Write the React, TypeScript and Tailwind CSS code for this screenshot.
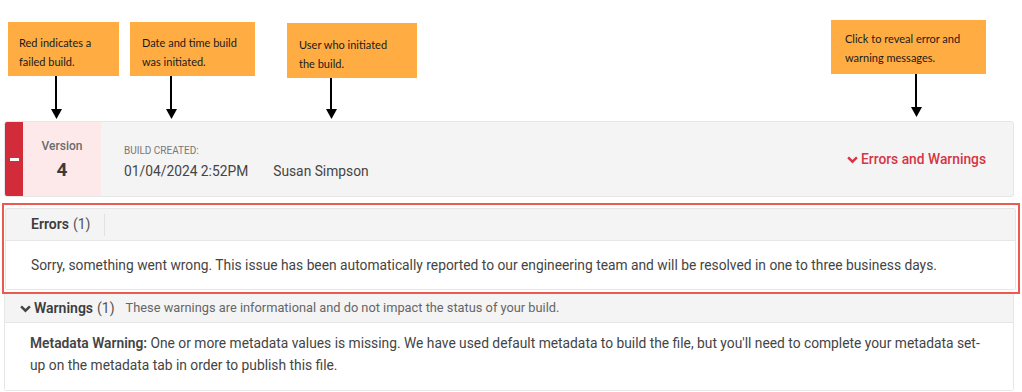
import React from "react";

type Note = {
  text: string[];
  box: string;
  arrow: string;
};

const notes: Note[] = [
  {
    text: ["Red indicates a", "failed build."],
    box: "left-[8px] top-[22px] w-[111px] h-[54px] pl-[11px] pt-[11px]",
    arrow: "left-[51px] top-[76px] h-[43px]",
  },
  {
    text: ["Date and time build", "was initiated."],
    box: "left-[130px] top-[22px] w-[125px] h-[54px] pl-[12px] pt-[11px]",
    arrow: "left-[166px] top-[76px] h-[43px]",
  },
  {
    text: ["User who initiated", "the build."],
    box: "left-[287px] top-[23px] w-[130px] h-[55px] pl-[12px] pt-[12px]",
    arrow: "left-[326px] top-[78px] h-[41px]",
  },
  {
    text: ["Click to reveal error and", "warning messages."],
    box: "left-[831px] top-[20px] w-[155px] h-[54px] pl-[14px] pt-[9px]",
    arrow: "left-[911px] top-[74px] h-[43px]",
  },
];

function Arrow({ className }: { className: string }) {
  return (
    <div className={`absolute w-[10px] flex flex-col items-center ${className}`}>
      <div className="w-[2px] flex-1 bg-black" />
      <svg width="11" height="10" viewBox="0 0 11 10">
        <path d="M0 0 L11 0 L5.5 10 Z" fill="#000" />
      </svg>
    </div>
  );
}

function Chevron({ color, size = 11 }: { color: string; size?: number }) {
  return (
    <svg width={size} height={size} viewBox="0 0 10 10" fill="none">
      <path d="M1 3 L5 7 L9 3" stroke={color} strokeWidth="2.2" />
    </svg>
  );
}

export default function App() {
  return (
    <div className="w-[1022px] h-[392px] bg-white overflow-hidden font-['Roboto',sans-serif] text-[#3d3d3d]">
      {/* annotations */}
      <div className="relative h-[121px]">
        {notes.map((n, i) => (
          <React.Fragment key={i}>
            <div
              className={`absolute bg-[#FFAD42] font-['Lato',sans-serif] text-[11px] leading-[19px] text-[#1a1a1a] ${n.box}`}
            >
              {n.text.map((t) => (
                <div key={t}>{t}</div>
              ))}
            </div>
            <Arrow className={n.arrow} />
          </React.Fragment>
        ))}
      </div>

      {/* build row */}
      <div className="ml-[4px] w-[1010px] h-[76px] flex rounded-[3px] overflow-hidden border border-[#e6e6e6] bg-[#f4f4f4]">
        <div className="w-[18px] bg-[#D22B3A] flex items-center justify-center">
          <div className="w-[9px] h-[3px] bg-white" />
        </div>
        <div className="w-[78px] bg-[#FDE9EA] flex flex-col items-center pt-[17px]">
          <div className="text-[12px] leading-[14px] font-medium text-[#6b6b6b]">Version</div>
          <div className="text-[19px] leading-[22px] font-bold text-[#3a3a3a] mt-[6px]">4</div>
        </div>
        <div className="flex-1 flex items-center pl-[23px] pr-[27px]">
          <div className="pt-[6px]">
            <div className="text-[10px] leading-[12px] text-[#777] uppercase">Build Created:</div>
            <div className="text-[13.8px] leading-[16px] text-[#444] mt-[6px]">01/04/2024 2:52PM</div>
          </div>
          <div className="text-[13.8px] leading-[16px] text-[#444] ml-[25px] pt-[24px]">Susan Simpson</div>
          <div className="flex-1" />
          <div className="flex items-center gap-[3px] text-[13.8px] font-medium text-[#D63444]">
            <Chevron color="#D63444" />
            Errors and Warnings
          </div>
        </div>
      </div>

      {/* errors */}
      <div className="ml-[2px] mt-[6px] w-[1018px] border-2 border-[#EB5A50] pt-[3px] pl-[1px] pr-[2px] pb-[2px]">
        <div className="border border-[#e6e6e6] rounded-[2px]">
          <div className="h-[32px] bg-[#f4f4f4] border-b border-[#e6e6e6] flex items-center pl-[25px]">
            <span className="text-[14px] font-semibold text-[#3d3d3d]">Errors</span>
            <span className="text-[14px] text-[#555] ml-[4px]">(1)</span>
            <div className="w-px h-[22px] bg-[#e2e2e2] ml-[14px]" />
          </div>
          <div className="h-[48px] bg-white flex items-center pl-[25px] text-[13.8px] text-[#444]">
            Sorry, something went wrong. This issue has been automatically reported to our engineering team and will be resolved in one to three business days.
          </div>
        </div>
      </div>

      {/* warnings */}
      <div className="ml-[4px] w-[1010px] border border-t-0 border-[#e6e6e6] rounded-b-[3px]">
        <div className="h-[29px] bg-[#f4f4f4] border-b border-[#e6e6e6] flex items-center pl-[15px]">
          <Chevron color="#444" />
          <span className="text-[14px] font-semibold text-[#3d3d3d] ml-[3px]">Warnings</span>
          <span className="text-[14px] text-[#555] ml-[4px]">(1)</span>
          <span className="text-[12.8px] text-[#666] ml-[11px]">
            These warnings are informational and do not impact the status of your build.
          </span>
        </div>
        <div className="bg-white pl-[25px] pr-[28px] pt-[9px] pb-[14px] text-[13.8px] leading-[22px] text-[#444]">
          <span className="font-semibold">Metadata Warning:</span> One or more metadata values is missing. We have used default metadata to build the file, but you'll need to complete your metadata set-up on the metadata tab in order to publish this file.
        </div>
      </div>
    </div>
  );
}
